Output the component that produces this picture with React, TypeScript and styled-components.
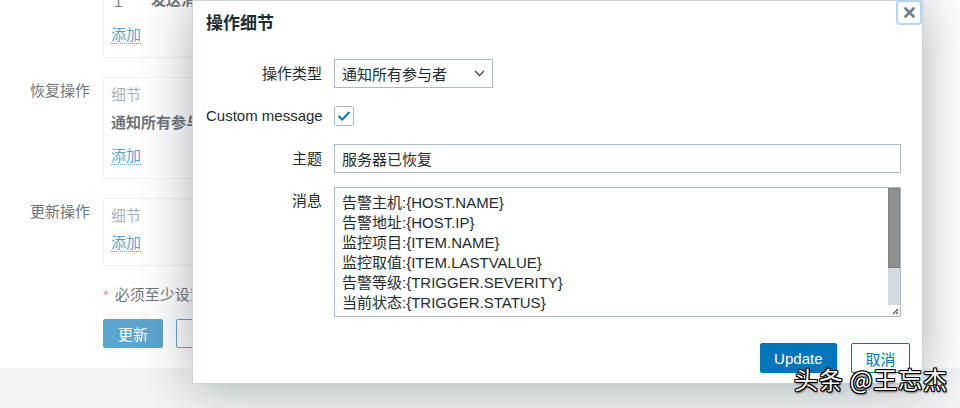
import React from 'react';
import styled, { createGlobalStyle } from 'styled-components';

const GlobalStyle = createGlobalStyle`
  html, body { margin: 0; padding: 0; background: #ffffff; }
  body {
    font-family: "Liberation Sans", "Noto Sans CJK SC", sans-serif;
    font-size: 15px;
    color: #1f2c33;
  }
  * { box-sizing: border-box; }
`;

const Screen = styled.div`
  position: relative;
  width: 960px;
  height: 408px;
  overflow: hidden;
  display: flex;
  flex-direction: column;
  background: #ebeef0;
`;

const Content = styled.div`
  flex: none;
  height: 368px;
  background: #ffffff;
  overflow: hidden;
`;

const PageForm = styled.div`
  display: grid;
  grid-template-columns: 90px 640px;
  column-gap: 13px;
  row-gap: 19px;
  margin-top: -46px;
`;

const PageLabel = styled.div`
  text-align: right;
  padding-top: 4px;
  line-height: 20px;
  color: #1f2c33;
`;

const OpBox = styled.div`
  border: 1px solid #e6eaed;
  padding: 7px 7px 12px;
  display: flex;
  flex-direction: column;
`;

const BoxHeader = styled.div`
  line-height: 20px;
  color: #768d99;
`;

const OpTable = styled.div`
  margin-bottom: 6px;
`;

const OpRow = styled.div<{ $cols?: string }>`
  display: grid;
  grid-template-columns: ${(p) => p.$cols || '1fr'};
  margin-top: 8px;
  line-height: 20px;
  font-weight: bold;
  color: #1f2c33;
  white-space: nowrap;
`;

const StepCell = styled.span`
  padding-left: 3px;
  padding-top: 2px;
  font-weight: normal;
`;

const AddLine = styled.div`
  margin-top: 7px;
  line-height: 20px;
`;

const AddLink = styled.a`
  color: #0275b8;
  text-decoration: none;
  border-bottom: 1px dotted #0275b8;
`;

const NoteCell = styled.div`
  grid-column: 2;
  display: flex;
  flex-direction: column;
  gap: 14px;
`;

const Note = styled.div`
  line-height: 20px;
  color: #1f2c33;
  white-space: nowrap;
`;

const Star = styled.span`
  color: #e45959;
  margin-right: 6px;
`;

const PageButtons = styled.div`
  display: flex;
  gap: 13px;
`;

const PageButton = styled.button<{ $outline?: boolean }>`
  height: 29px;
  padding: 0 14px;
  border-radius: 2px;
  border: 1px solid #0275b8;
  background: ${(p) => (p.$outline ? '#ffffff' : '#0275b8')};
  color: ${(p) => (p.$outline ? '#0275b8' : '#ffffff')};
  font: inherit;
  font-size: 15px;
`;

const Veil = styled.div`
  position: absolute;
  inset: 0;
  background: rgba(255, 255, 255, 0.35);
`;

const Dialog = styled.div`
  position: absolute;
  left: 192px;
  top: 0;
  width: 731px;
  background: #ffffff;
  border: 1px solid #c9d2d7;
  box-shadow: 0 0 50px rgba(30, 45, 55, 0.38);
  padding: 0 12px 10px 13px;
`;

const CloseButton = styled.button`
  position: absolute;
  top: -1px;
  right: 0;
  width: 26px;
  height: 25px;
  padding: 0;
  border: 2px solid #b3d7f5;
  border-radius: 4px;
  background: #ffffff;
  display: flex;
  align-items: center;
  justify-content: center;
`;

const Title = styled.h4`
  margin: 0;
  padding-top: 11px;
  font-size: 17px;
  line-height: 24px;
  font-weight: bold;
  color: #1f2c33;
`;

const DialogForm = styled.div`
  margin-top: 23px;
  display: grid;
  grid-template-columns: 116px 567px;
  column-gap: 12px;
  row-gap: 14px;
`;

const FieldLabel = styled.label<{ $top?: boolean }>`
  text-align: right;
  line-height: 20px;
  align-self: ${(p) => (p.$top ? 'start' : 'center')};
  padding-top: ${(p) => (p.$top ? '4px' : '0')};
  color: #1f2c33;
  white-space: nowrap;
`;

const Select = styled.div`
  width: 159px;
  height: 29px;
  border: 1px solid #acbbc4;
  display: flex;
  align-items: center;
  justify-content: space-between;
  padding: 0 7px 0 7px;
  color: #1f2c33;
`;

const CheckCell = styled.div`
  height: 28px;
  display: flex;
  align-items: center;
`;

const CheckBox = styled.span`
  width: 20px;
  height: 20px;
  border: 1px solid #acbbc4;
  border-radius: 3px;
  display: flex;
  align-items: center;
  justify-content: center;
`;

const TextInput = styled.input`
  width: 567px;
  height: 29px;
  border: 1px solid #acbbc4;
  padding: 0 7px;
  font: inherit;
  font-size: 15px;
  color: #1f2c33;
  outline: none;
`;

const MessageBox = styled.div`
  width: 567px;
  height: 130px;
  border: 1px solid #acbbc4;
  display: flex;
  align-items: flex-start;
`;

const MessageText = styled.textarea`
  flex: 1;
  height: 126px;
  border: none;
  padding: 5px 7px 0;
  font: inherit;
  font-size: 15px;
  line-height: 20px;
  color: #1f2c33;
  resize: none;
  overflow: hidden;
  outline: none;
  white-space: pre;
  background: transparent;
`;

const ScrollBar = styled.div`
  width: 12px;
  height: 128px;
  display: flex;
  flex-direction: column;
`;

const ScrollThumb = styled.div`
  height: 80px;
  background: #909090;
  border: 1px solid #7d7d7d;
`;

const ScrollTrack = styled.div`
  flex: 1;
  background: #d3dbe0;
`;

const Resizer = styled.div`
  height: 11px;
  background: #ffffff;
  display: flex;
  align-items: flex-end;
  justify-content: flex-end;
`;

const DialogFooter = styled.div`
  margin-top: 26px;
  display: flex;
  justify-content: flex-end;
  gap: 14px;
`;

const DialogButton = styled.button<{ $outline?: boolean }>`
  height: 30px;
  padding: 0 13.5px;
  min-width: 59px;
  border-radius: 2px;
  border: 1px solid #0275b8;
  background: ${(p) => (p.$outline ? '#ffffff' : '#0275b8')};
  color: ${(p) => (p.$outline ? '#0275b8' : '#ffffff')};
  font: inherit;
  font-size: 15px;
`;

const Watermark = styled.div`
  position: absolute;
  left: 794px;
  top: 364px;
  font-family: "Noto Sans CJK SC", sans-serif;
  font-size: 24px;
  line-height: 30px;
  letter-spacing: 0.8px;
  color: #ffffff;
  white-space: nowrap;
  text-shadow: 1px 1px 0 #000, -1px -1px 0 #000, 1px -1px 0 #000, -1px 1px 0 #000,
    0 1px 0 #000, 1px 0 0 #000, 0 -1px 0 #000, -1px 0 0 #000, 1px 2px 2px rgba(0,0,0,0.6);
`;

const message = [
  '告警主机:{HOST.NAME}',
  '告警地址:{HOST.IP}',
  '监控项目:{ITEM.NAME}',
  '监控取值:{ITEM.LASTVALUE}',
  '告警等级:{TRIGGER.SEVERITY}',
  '当前状态:{TRIGGER.STATUS}',
  '告警信息:{TRIGGER.NAME}',
  '恢复时间:{EVENT.RECOVERY.DATE} {EVENT.RECOVERY.TIME}',
  '事件ID:{EVENT.ID}',
].join('\n');

export default function App() {
  return (
    <>
      <GlobalStyle />
      <Screen>
        <Content>
          <PageForm>
            <PageLabel>操作</PageLabel>
            <OpBox>
              <BoxHeader>步骤</BoxHeader>
              <OpTable>
                <OpRow $cols="40px 1fr">
                  <StepCell>1</StepCell>
                  <span>发送消息给用户群组: Zabbix administrators 通过 所有介质</span>
                </OpRow>
              </OpTable>
              <AddLine><AddLink>添加</AddLink></AddLine>
            </OpBox>

            <PageLabel>恢复操作</PageLabel>
            <OpBox>
              <BoxHeader>细节</BoxHeader>
              <OpTable>
                <OpRow>通知所有参与者</OpRow>
              </OpTable>
              <AddLine><AddLink>添加</AddLink></AddLine>
            </OpBox>

            <PageLabel>更新操作</PageLabel>
            <OpBox>
              <BoxHeader>细节</BoxHeader>
              <AddLine><AddLink>添加</AddLink></AddLine>
            </OpBox>

            <NoteCell>
              <Note><Star>*</Star>必须至少设置一个执行内容。</Note>
              <PageButtons>
                <PageButton>更新</PageButton>
                <PageButton $outline>克隆</PageButton>
              </PageButtons>
            </NoteCell>
          </PageForm>
        </Content>
        <Veil />
        <Dialog>
          <CloseButton aria-label="close">
            <svg width="11" height="11" viewBox="0 0 11 11">
              <path d="M1.5 1.5 L9.5 9.5 M9.5 1.5 L1.5 9.5" stroke="#6c7e88" strokeWidth="2.6" strokeLinecap="round" />
            </svg>
          </CloseButton>
          <Title>操作细节</Title>
          <DialogForm>
            <FieldLabel>操作类型</FieldLabel>
            <Select>
              <span>通知所有参与者</span>
              <svg width="11" height="7" viewBox="0 0 11 7">
                <polyline points="1,1 5.5,5.5 10,1" fill="none" stroke="#3c4850" strokeWidth="1.3" />
              </svg>
            </Select>

            <FieldLabel>Custom message</FieldLabel>
            <CheckCell>
              <CheckBox>
                <svg width="14" height="12" viewBox="0 0 14 12">
                  <path d="M1.5 6 L5.2 9.6 L12.5 2" fill="none" stroke="#0275b8" strokeWidth="2" />
                </svg>
              </CheckBox>
            </CheckCell>

            <FieldLabel>主题</FieldLabel>
            <TextInput defaultValue="服务器已恢复" />

            <FieldLabel $top>消息</FieldLabel>
            <MessageBox>
              <MessageText defaultValue={message} readOnly />
              <ScrollBar>
                <ScrollThumb />
                <ScrollTrack />
                <Resizer>
                  <svg width="11" height="11" viewBox="0 0 11 11">
                    <path d="M4 9 L9 4 M7 9 L9 7" stroke="#555" strokeWidth="1.2" />
                  </svg>
                </Resizer>
              </ScrollBar>
            </MessageBox>
          </DialogForm>
          <DialogFooter>
            <DialogButton>Update</DialogButton>
            <DialogButton $outline>取消</DialogButton>
          </DialogFooter>
        </Dialog>
        <Watermark>头条 @王忘杰</Watermark>
      </Screen>
    </>
  );
}
